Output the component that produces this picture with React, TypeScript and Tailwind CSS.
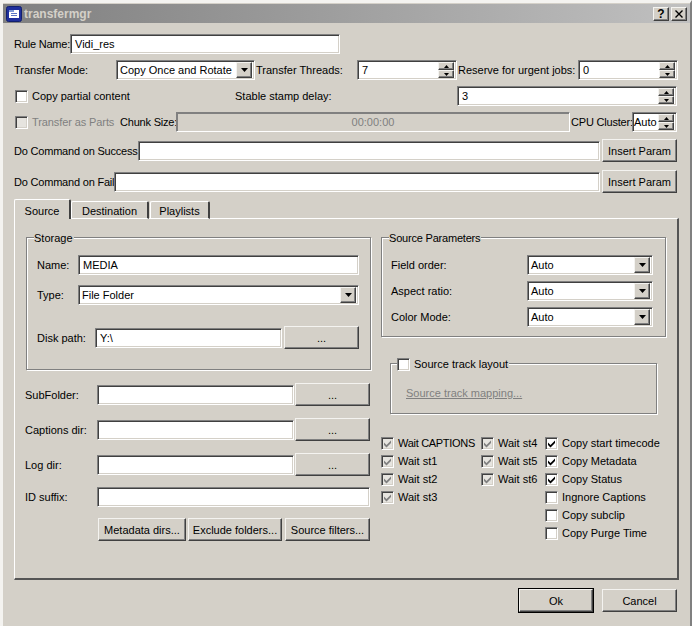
import type { ReactNode } from 'react';

const sunken = 'bg-white border border-t-[#808080] border-l-[#808080] border-b-white border-r-white shadow-[inset_1px_1px_0_#404040,inset_-1px_-1px_0_#d4d0c8]';
const raised = 'bg-[#d4d0c8] border border-t-[#f4f3f0] border-l-[#f4f3f0] border-b-[#404040] border-r-[#404040] shadow-[inset_-1px_-1px_0_#808080]';

function Label({ children, w, className = '' }: { children: ReactNode; w?: number; className?: string }) {
  return (
    <span className={`whitespace-nowrap shrink-0 pt-[1px] ${className}`} style={w ? { width: w } : undefined}>
      {children}
    </span>
  );
}

function Input({ value = '', w, h = 20, className = '' }: { value?: string; w: number; h?: number; className?: string }) {
  return (
    <div className={`${sunken} flex items-center pl-[4px] shrink-0 ${className}`} style={{ width: w, height: h }}>
      <span className="pt-[1px]">{value}</span>
    </div>
  );
}

function Button({ children, w, h = 23, className = '' }: { children: ReactNode; w: number; h?: number; className?: string }) {
  return (
    <div className={`${raised} flex items-center justify-center whitespace-nowrap shrink-0 ${className}`} style={{ width: w, height: h }}>
      <span className="pt-[1px]">{children}</span>
    </div>
  );
}

function Select({ value, w }: { value: string; w: number }) {
  return (
    <div className={`${sunken} flex items-center justify-between pl-[3px] pr-[2px] shrink-0`} style={{ width: w, height: 20 }}>
      <span className="whitespace-nowrap pt-[1px]">{value}</span>
      <div className={`${raised} w-[16px] h-[16px] flex items-center justify-center`}>
        <svg width="7" height="4" viewBox="0 0 7 4"><path d="M0 0h7L3.5 4z" fill="#000" /></svg>
      </div>
    </div>
  );
}

function Spin({ value, w, className = '' }: { value: string; w: number; className?: string }) {
  return (
    <div className={`${sunken} flex items-center justify-between pl-[4px] pr-[2px] shrink-0 ${className}`} style={{ width: w, height: 20 }}>
      <span className="pt-[1px]">{value}</span>
      <div className="flex flex-col w-[16px] h-[16px]">
        <div className={`${raised} h-[8px] flex items-center justify-center`}>
          <svg width="5" height="3" viewBox="0 0 5 3"><path d="M2.5 0L5 3H0z" fill="#000" /></svg>
        </div>
        <div className={`${raised} h-[8px] flex items-center justify-center`}>
          <svg width="5" height="3" viewBox="0 0 5 3"><path d="M0 0h5L2.5 3z" fill="#000" /></svg>
        </div>
      </div>
    </div>
  );
}

function Check({ label, checked, disabled, className = '' }: { label: string; checked?: boolean; disabled?: boolean; className?: string }) {
  return (
    <div className="flex items-center h-[18px] gap-[4px] shrink-0">
      <div className={`w-[13px] h-[13px] shrink-0 flex items-center justify-center border border-t-[#808080] border-l-[#808080] border-b-white border-r-white shadow-[inset_1px_1px_0_#404040,inset_-1px_-1px_0_#d4d0c8] ${disabled ? 'bg-[#e6e4df]' : 'bg-white'}`}>
        {checked && (
          <svg width="9" height="9" viewBox="0 0 9 9">
            <path d="M1 3.5L3.5 6 8 1.5V4L3.5 8.5 1 6z" fill={disabled ? '#808080' : '#000'} />
          </svg>
        )}
      </div>
      <span className={`whitespace-nowrap pt-[1px] ${disabled && !checked ? 'text-[#808080]' : ''} ${className}`}>{label}</span>
    </div>
  );
}

function Group({ title, w, h, className = '', children }: { title: ReactNode; w: number; h: number; className?: string; children: ReactNode }) {
  return (
    <div
      className={`relative border border-[#808080] shadow-[1px_1px_0_#fff,inset_1px_1px_0_#fff] shrink-0 ${className}`}
      style={{ width: w, height: h }}
    >
      <div className="absolute left-[7px] top-[-8px] bg-[#d4d0c8] px-[1px] h-[16px] flex items-center leading-none">{title}</div>
      {children}
    </div>
  );
}

function DirRow({ label, className = '' }: { label: string; className?: string }) {
  return (
    <div className={`flex items-center h-[23px] ${className}`}>
      <Label w={71} className="ml-[-1px]">{label}</Label>
      <Input w={197} className="ml-[1px]" />
      <Button w={75} className="ml-[1px]">...</Button>
    </div>
  );
}

export default function App() {
  return (
    <div
      className="w-[692px] h-[626px] bg-[#d4d0c8] text-[#000] text-[11px] leading-none overflow-hidden border-t-[3px] border-l-[3px] border-r-[2px] border-t-[#f4f3f0] border-l-[#f4f3f0] border-r-[#808080] flex flex-col"
      style={{ fontFamily: '"Liberation Sans", Arial, sans-serif' }}
    >
      {/* Title bar */}
      <div className="h-[19px] mt-[1px] bg-gradient-to-r from-[#808080] to-[#c0c0c0] flex items-center pl-[3px] pr-[3px] shrink-0">
        <svg width="16" height="16" viewBox="0 0 16 16" className="shrink-0">
          <rect x="0.5" y="0.5" width="15" height="15" rx="2" fill="#1f2f9c" stroke="#12206e" />
          <rect x="3" y="4" width="10" height="8" fill="#fff" />
          <rect x="3" y="4" width="5" height="2" fill="#7f9ad8" />
          <rect x="5" y="7" width="6" height="1" fill="#5b74c4" />
          <rect x="5" y="9" width="6" height="1" fill="#5b74c4" />
        </svg>
        <span className="ml-[2px] font-bold text-[#d4d0c8] text-[12px]">transfermgr</span>
        <div className={`${raised} ml-auto w-[16px] h-[14px] flex items-center justify-center font-bold text-[12px]`}>?</div>
        <div className={`${raised} ml-[2px] w-[16px] h-[14px] flex items-center justify-center`}>
          <svg width="8" height="8" viewBox="0 0 8 8"><path d="M0.5 0.5l7 7M7.5 0.5l-7 7" stroke="#000" strokeWidth="1.4" /></svg>
        </div>
      </div>

      <div className="flex flex-col pl-[11px]">
        {/* Rule name */}
        <div className="flex items-center h-[20px] mt-[11px]">
          <Label w={56} className="tracking-[-0.2px]">Rule Name:</Label>
          <Input value="Vidi_res" w={270} />
        </div>

        {/* Transfer mode */}
        <div className="flex items-center h-[20px] mt-[6px]">
          <Label w={102}>Transfer Mode:</Label>
          <Select value="Copy Once and Rotate" w={139} />
          <Label w={101} className="ml-[1px]">Transfer Threads:</Label>
          <Spin value="7" w={100} />
          <Label w={120} className="ml-[1px]">Reserve for urgent jobs:</Label>
          <Spin value="0" w={100} />
        </div>

        {/* Partial content */}
        <div className="flex items-center h-[20px] mt-[6px]">
          <div className="w-[221px] pl-[1px]"><Check label="Copy partial content" /></div>
          <Label w={222}>Stable stamp delay:</Label>
          <Spin value="3" w={220} />
        </div>

        {/* Parts */}
        <div className="flex items-center h-[20px] mt-[6px]">
          <div className="w-[106px] pl-[1px]"><Check label="Transfer as Parts" disabled className="tracking-[-0.1px]" /></div>
          <Label w={56} className="tracking-[-0.2px]">Chunk Size:</Label>
          <div className="w-[394px] h-[20px] border border-t-[#808080] border-l-[#808080] border-b-white border-r-white shadow-[inset_1px_1px_0_#808080] flex items-center justify-center text-[#808080] shrink-0">
            <span className="pt-[1px]">00:00:00</span>
          </div>
          <Label w={61} className="ml-[1px] tracking-[-0.2px]">CPU Cluster:</Label>
          <Spin value="Auto" w={45} className="!pl-[1px]" />
        </div>

        {/* Commands */}
        <div className="flex items-center h-[23px] mt-[7px]">
          <Label w={124} className="tracking-[-0.2px]">Do Command on Success:</Label>
          <Input w={462} />
          <Button w={75} className="ml-[2px]">Insert Param</Button>
        </div>
        <div className="flex items-center h-[23px] mt-[8px]">
          <Label w={100} className="tracking-[-0.2px]">Do Command on Fail:</Label>
          <Input w={486} />
          <Button w={75} className="ml-[2px]">Insert Param</Button>
        </div>

        {/* Tabs */}
        <div className="flex items-end h-[20px] mt-[6px] relative z-10">
          <div className="w-[57px] h-[20px] bg-[#d4d0c8] border-l border-t border-l-white border-t-white rounded-t-[2px] border-r-2 border-r-[#404040] flex items-center justify-center">
            <span className="pt-[4px]">Source</span>
          </div>
          <div className="w-[78px] h-[18px] border-l border-t border-l-white border-t-white border-r-2 border-r-[#404040] rounded-t-[2px] flex items-center justify-center border-b border-b-white">
            <span className="pt-[3px]">Destination</span>
          </div>
          <div className="w-[60px] h-[18px] ml-[1px] border-l border-t border-l-white border-t-white border-r-2 border-r-[#404040] rounded-t-[2px] flex items-center justify-center border-b border-b-white">
            <span className="pt-[3px]">Playlists</span>
          </div>
        </div>

        {/* Pane */}
        <div className="w-[665px] h-[362px] mt-[-1px] border-t border-l border-t-white border-l-white border-r-2 border-b-2 border-r-[#555] border-b-[#555] flex pl-[11px] pt-[18px]">
          <div className="w-[345px] flex flex-col shrink-0">
            <Group title={<span className="pt-[1px] ml-[-1px]">Storage</span>} w={345} h={133}>
              <div className="flex items-center h-[20px] mt-[17px] pl-[10px]">
                <Label w={41}>Name:</Label>
                <Input value="MEDIA" w={281} />
              </div>
              <div className="flex items-center h-[20px] mt-[10px] pl-[10px]">
                <Label w={41}>Type:</Label>
                <Select value="File Folder" w={281} />
              </div>
              <div className="flex items-center h-[23px] mt-[21px] pl-[10px]">
                <Label w={58}>Disk path:</Label>
                <Input value="Y:\" w={187} />
                <Button w={75} className="ml-[2px]">...</Button>
              </div>
            </Group>
            <DirRow label="SubFolder:" className="mt-[13px]" />
            <DirRow label="Captions dir:" className="mt-[12px]" />
            <DirRow label="Log dir:" className="mt-[12px]" />
            <div className="flex items-center h-[20px] mt-[11px]">
              <Label w={71} className="ml-[-1px]">ID suffix:</Label>
              <Input w={273} className="ml-[1px]" />
            </div>
            <div className="flex items-center mt-[11px] pl-[72px] gap-[2px]">
              <Button w={88}>Metadata dirs...</Button>
              <Button w={94}>Exclude folders...</Button>
              <Button w={85} className="ml-[1px]">Source filters...</Button>
            </div>
          </div>

          <div className="flex flex-col ml-[10px]">
            <Group title={<span className="pt-[1px] ml-[-1px] tracking-[-0.2px]">Source Parameters</span>} w={285} h={100}>
              <div className="flex flex-col gap-[6px] mt-[17px] pl-[9px]">
                {['Field order:', 'Aspect ratio:', 'Color Mode:'].map((l) => (
                  <div key={l} className="flex items-center h-[20px]">
                    <Label w={136}>{l}</Label>
                    <Select value="Auto" w={126} />
                  </div>
                ))}
              </div>
            </Group>
            <Group
              title={<div className="ml-[-2px]"><Check label="Source track layout" /></div>}
              w={267}
              h={51}
              className="ml-[9px] mt-[26px]"
            >
              <div className="mt-[24px] ml-[15px] text-[#808080] underline">Source track mapping...</div>
            </Group>
            <div className="flex mt-[20px]">
              <div className="w-[100px] flex flex-col">
                <Check label="Wait CAPTIONS" checked disabled className="tracking-[-0.3px]" />
                <Check label="Wait st1" checked disabled />
                <Check label="Wait st2" checked disabled />
                <Check label="Wait st3" checked disabled />
              </div>
              <div className="w-[64px] flex flex-col">
                <Check label="Wait st4" checked disabled />
                <Check label="Wait st5" checked disabled />
                <Check label="Wait st6" checked disabled />
              </div>
              <div className="flex flex-col">
                <Check label="Copy start timecode" checked />
                <Check label="Copy Metadata" checked />
                <Check label="Copy Status" checked />
                <Check label="Ingnore Captions" />
                <Check label="Copy subclip" />
                <Check label="Copy Purge Time" />
              </div>
            </div>
          </div>
        </div>

        {/* Footer */}
        <div className="flex justify-end items-center gap-[8px] mt-[8px] pr-[11px] w-[674px]">
          <div className="border border-black"><Button w={74} h={23}>Ok</Button></div>
          <Button w={75} h={23}>Cancel</Button>
        </div>
      </div>
    </div>
  );
}
